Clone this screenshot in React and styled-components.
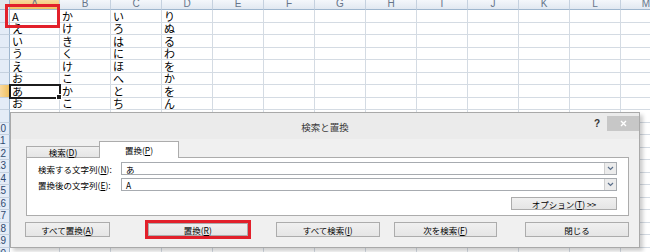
import React from "react";
import styled, { createGlobalStyle } from "styled-components";

const GlobalStyle = createGlobalStyle`
    html, body {
        margin: 0;
        padding: 0;
        background: #ffffff;
        overflow: hidden;
    }
    body {
        font-family: "Noto Sans CJK JP", "Liberation Sans", sans-serif;
    }
`;

const Screen = styled.div`
    position: relative;
    width: 650px;
    height: 252px;
    overflow: hidden;
    background: #ffffff;
`;

const Sheet = styled.div`
    display: grid;
    grid-template-columns: 10px 50px repeat(12, 51px);
    grid-template-rows: 10px repeat(10, 13px 12px);
`;

const Corner = styled.div`
    background: #dfe6ef;
    border-right: 1px solid #9eb6ce;
    border-bottom: 1px solid #9eb6ce;
`;

const ColHead = styled.div`
    display: flex;
    align-items: flex-end;
    justify-content: center;
    overflow: hidden;
    background: ${(p) =>
        p.$selected
            ? "linear-gradient(#f9d99f, #f1c15f)"
            : "linear-gradient(#f4f7fb, #e1e8f1)"};
    border-right: 1px solid #c5d1df;
    border-bottom: 1px solid #9eb6ce;
    font-family: "Liberation Sans", sans-serif;
    font-size: 10px;
    line-height: 10px;
    color: #66758a;
`;

const RowHead = styled.div`
    display: flex;
    justify-content: flex-end;
    align-items: center;
    overflow: hidden;
    background: ${(p) =>
        p.$selected ? "linear-gradient(90deg, #f9d99f, #f1c15f)" : "#e4ecf7"};
    border-right: 1px solid #9eb6ce;
    border-bottom: 1px solid #c5d1df;
    font-family: "Liberation Sans", sans-serif;
    font-size: 10px;
    line-height: 10px;
    color: #2f4a70;
`;

const RowNum = styled.span`
    flex: 0 0 17px;
    text-align: center;
`;

const Cell = styled.div`
    position: relative;
    display: flex;
    align-items: center;
    padding-left: 2px;
    border-right: 1px solid #d4dbe3;
    border-bottom: 1px solid #d4dbe3;
    font-size: 11px;
    line-height: 11px;
    color: #000000;
    white-space: nowrap;
    outline: ${(p) => (p.$active ? "2px solid #1c1c1c" : "none")};
    outline-offset: -1px;
    z-index: ${(p) => (p.$active ? 1 : 0)};

    &::after {
        content: "";
        display: ${(p) => (p.$active ? "block" : "none")};
        position: absolute;
        right: -3px;
        bottom: -3px;
        width: 4px;
        height: 4px;
        background: #1c1c1c;
        border: 1px solid #ffffff;
    }
`;

const Mark = styled.div`
    position: absolute;
    left: 5px;
    top: 4px;
    width: 55px;
    height: 24px;
    box-sizing: border-box;
    border: 3px solid #e2202b;
    z-index: 2;
`;

const Dialog = styled.div`
    position: absolute;
    left: 10px;
    top: 112px;
    width: 630px;
    height: 136px;
    box-sizing: border-box;
    display: flex;
    flex-direction: column;
    background: #f0f0f0;
    border: 1px solid #a9a9a9;
    box-shadow: 3px 3px 4px rgba(0, 0, 0, 0.2);
    z-index: 3;
    font-size: 8.5px;
    color: #000000;
`;

const TitleBar = styled.div`
    display: grid;
    grid-template-columns: 1fr auto 1fr;
    height: 26px;
    background: #ebebeb;
`;

const Title = styled.div`
    grid-column: 2;
    align-self: center;
    font-size: 9.5px;
    color: #3b3b3b;
    padding-top: 2px;
`;

const Controls = styled.div`
    grid-column: 3;
    justify-self: end;
    display: flex;
    align-items: center;
    gap: 7px;
    margin-top: 3px;
    height: 15px;
`;

const Help = styled.span`
    font-family: "Liberation Sans", sans-serif;
    font-weight: bold;
    font-size: 10px;
    color: #333333;
`;

const Close = styled.div`
    width: 32px;
    height: 15px;
    display: flex;
    align-items: center;
    justify-content: center;
    background: #c7c7c7;
`;

const Body = styled.div`
    display: flex;
    flex-direction: column;
    padding: 2px 10px 0 15px;
`;

const TabRow = styled.div`
    display: flex;
    align-items: flex-end;
    height: 17px;
    margin-bottom: -1px;
    position: relative;
    z-index: 1;
`;

const Tab = styled.div`
    box-sizing: border-box;
    width: ${(p) => (p.$active ? 80 : 74)}px;
    height: ${(p) => (p.$active ? 17 : 12)}px;
    display: flex;
    align-items: center;
    justify-content: center;
    border: 1px solid #acacac;
    border-bottom: ${(p) => (p.$active ? "none" : "1px solid #acacac")};
    background: ${(p) =>
        p.$active ? "#ffffff" : "linear-gradient(#f0f0f0, #e5e5e5)"};
    margin-left: ${(p) => (p.$active ? -1 : 0)}px;
    line-height: 10px;
`;

const Panel = styled.div`
    box-sizing: border-box;
    height: 59px;
    display: flex;
    flex-direction: column;
    padding: 4px 11px 0 11px;
    background: #ffffff;
    border: 1px solid #acacac;
`;

const Field = styled.div`
    display: flex;
    align-items: center;
    height: 13px;
    margin-bottom: 3px;
`;

const Label = styled.div`
    width: 83px;
    line-height: 10px;
    white-space: nowrap;
`;

const Combo = styled.div`
    flex: 1;
    box-sizing: border-box;
    height: 13px;
    display: flex;
    align-items: center;
    border: 1px solid #a7abb0;
    background: #ffffff;
    padding-left: 4px;
    line-height: 10px;
`;

const ComboText = styled.span`
    flex: 1;
`;

const Drop = styled.div`
    box-sizing: border-box;
    width: 12px;
    height: 11px;
    display: flex;
    align-items: center;
    justify-content: center;
    background: #ececec;
    border-left: 1px solid #cfcfcf;
`;

const OptionRow = styled.div`
    display: flex;
    justify-content: flex-end;
    margin-top: 3px;
`;

const Button = styled.div`
    box-sizing: border-box;
    width: ${(p) => p.$w}px;
    height: ${(p) => p.$h || 15}px;
    margin-left: ${(p) => p.$ml || 0}px;
    display: flex;
    align-items: center;
    justify-content: center;
    border: 1px solid #acacac;
    background: linear-gradient(#f0f0f0, #e5e5e5);
    line-height: 10px;
    white-space: nowrap;
`;

const ButtonRow = styled.div`
    display: flex;
    align-items: center;
    margin-top: 6px;
    margin-left: -1px;
    height: 15px;
`;

const RedFrame = styled.div`
    box-sizing: border-box;
    margin-left: ${(p) => p.$ml}px;
    border: 3px solid #e2202b;
    height: 19px;
    display: flex;
`;

const Chevron = () => (
    <svg width="7" height="5" viewBox="0 0 7 5">
        <path d="M1 1 L3.5 3.5 L6 1" fill="none" stroke="#5b6f8a" strokeWidth="1.2" />
    </svg>
);

const CloseIcon = () => (
    <svg width="7" height="7" viewBox="0 0 7 7">
        <path d="M1 1 L6 6 M6 1 L1 6" stroke="#ffffff" strokeWidth="1.4" />
    </svg>
);

const COLS = ["A", "B", "C", "D", "E", "F", "G", "H", "I", "J", "K", "L", "M"];

const DATA = [
    ["A", "か", "い", "り"],
    ["え", "け", "ろ", "ぬ"],
    ["い", "き", "は", "る"],
    ["う", "く", "に", "わ"],
    ["え", "け", "ほ", "を"],
    ["お", "こ", "へ", "か"],
    ["あ", "か", "と", "を"],
    ["お", "こ", "ち", "ん"],
];

const ROWS = 20;

const App = () => {
    const rows = [];
    for (let r = 0; r < ROWS; r++) {
        const n = r + 1;
        const cells = [
            <RowHead key="h" $selected={r === 6}>
                <RowNum>{n >= 10 ? n : ""}</RowNum>
            </RowHead>,
        ];
        COLS.forEach((c, ci) => {
            const v = DATA[r] ? DATA[r][ci] : "";
            cells.push(
                <Cell key={c} $active={r === 6 && ci === 0}>
                    {v}
                </Cell>
            );
        });
        rows.push(<React.Fragment key={r}>{cells}</React.Fragment>);
    }

    return (
        <Screen>
            <GlobalStyle />
            <Sheet>
                <Corner />
                {COLS.map((c, i) => (
                    <ColHead key={c} $selected={i === 0}>
                        {c}
                    </ColHead>
                ))}
                {rows}
            </Sheet>
            <Mark />
            <Dialog>
                <TitleBar>
                    <Title>検索と置換</Title>
                    <Controls>
                        <Help>?</Help>
                        <Close>
                            <CloseIcon />
                        </Close>
                    </Controls>
                </TitleBar>
                <Body>
                    <TabRow>
                        <Tab>
                            検索(<u>D</u>)
                        </Tab>
                        <Tab $active>
                            置換(<u>P</u>)
                        </Tab>
                    </TabRow>
                    <Panel>
                        <Field>
                            <Label>
                                検索する文字列(<u>N</u>):
                            </Label>
                            <Combo>
                                <ComboText>あ</ComboText>
                                <Drop>
                                    <Chevron />
                                </Drop>
                            </Combo>
                        </Field>
                        <Field>
                            <Label>
                                置換後の文字列(<u>E</u>):
                            </Label>
                            <Combo>
                                <ComboText>A</ComboText>
                                <Drop>
                                    <Chevron />
                                </Drop>
                            </Combo>
                        </Field>
                        <OptionRow>
                            <Button $w={106} $h={13}>
                                オプション(<u>T</u>) &gt;&gt;
                            </Button>
                        </OptionRow>
                    </Panel>
                    <ButtonRow>
                        <Button $w={85}>
                            すべて置換(<u>A</u>)
                        </Button>
                        <RedFrame $ml={35}>
                            <Button $w={100} $h={13}>
                                置換(<u>R</u>)
                            </Button>
                        </RedFrame>
                        <Button $w={104} $ml={25}>
                            すべて検索(<u>I</u>)
                        </Button>
                        <Button $w={104} $ml={14}>
                            次を検索(<u>F</u>)
                        </Button>
                        <Button $w={104} $ml={28}>
                            閉じる
                        </Button>
                    </ButtonRow>
                </Body>
            </Dialog>
        </Screen>
    );
};

export default App;
